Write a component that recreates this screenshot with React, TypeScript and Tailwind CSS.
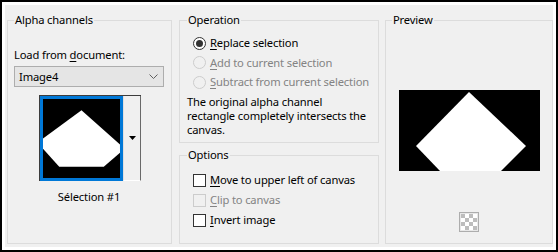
import React from "react";

const U = ({ c }: { c: string }) => <span className="underline underline-offset-[2px]">{c}</span>;

function Radio({ checked, disabled }: { checked?: boolean; disabled?: boolean }) {
  return (
    <svg width="13" height="13" viewBox="0 0 13 13" className="shrink-0">
      <circle cx="6.5" cy="6.5" r="6" fill={disabled ? "#f0f0f0" : "#ffffff"} stroke={disabled ? "#cccccc" : "#333333"} strokeWidth="1" />
      {checked && <circle cx="6.5" cy="6.5" r="3.5" fill="#333333" />}
    </svg>
  );
}

function Check({ disabled }: { disabled?: boolean }) {
  return (
    <div
      className={
        "w-[13px] h-[13px] shrink-0 border " +
        (disabled ? "border-[#cccccc] bg-[#f0f0f0]" : "border-[#333333] bg-white")
      }
    />
  );
}

export default function App() {
  return (
    <div
      className="w-[558px] h-[252px] border-2 border-black bg-white p-[3px] text-[11.2px] tracking-[-0.15px] text-black"
      style={{ fontFamily: '"Noto Sans", Arial, sans-serif' }}
    >
      <div className="flex h-full bg-[#f0f0f0] pl-[2px] pt-[7px]">
        {/* Alpha channels */}
        <fieldset className="w-[165px] h-[232px] border border-[#dcdcdc] pl-[6px]">
          <legend className="ml-[0px] px-[1px] leading-[16px]">Alpha channels</legend>
          <div className="mt-[19px] leading-[16px]">
            Load from <U c="d" />ocument:
          </div>
          <div className="mt-[3px] w-[150px] h-[21px] border border-[#adadad] bg-[#e5e5e5] flex items-center justify-between pl-[4px] pr-[5px]">
            <span className="leading-[16px]">Image4</span>
            <svg width="9" height="5" viewBox="0 0 9 5">
              <path d="M0.5 0.5 L4.5 4.5 L8.5 0.5" fill="none" stroke="#606060" strokeWidth="1" />
            </svg>
          </div>
          <div className="mt-[8px] ml-[25px] flex w-[102px] h-[86px] border-t border-l border-[#3c3c3c]">
            <div className="w-[83px] h-[85px] border-[3px] border-[#0078d7] bg-black">
              <svg width="77" height="79" viewBox="0 0 76 78" className="block">
                <polygon points="38,11 0,39 0,49 16,67 60,67 76,53 76,45" fill="white" />
              </svg>
            </div>
            <div className="flex-1 h-[85px] border-r border-b border-r-[#696969] border-b-white border-l border-l-[#e0e0e0] flex items-center justify-center">
              <svg width="7" height="4" viewBox="0 0 7 4">
                <polygon points="0,0 7,0 3.5,4" fill="black" />
              </svg>
            </div>
          </div>
          <div className="mt-[8px] w-[150px] text-center leading-[16px]">Sélection #1</div>
        </fieldset>

        {/* Middle column */}
        <div className="ml-[7px] flex flex-col">
          <fieldset className="w-[200px] h-[131px] border border-[#dcdcdc] pl-[7px]">
            <legend className="ml-[0px] px-[1px] leading-[16px]">Operation</legend>
            <div className="mt-[5px] ml-[6px]">
              <div className="h-[20px] flex items-center gap-[4px]">
                <Radio checked />
                <span className="leading-[16px]">
                  <U c="R" />eplace selection
                </span>
              </div>
              <div className="h-[19px] flex items-center gap-[4px] text-[#838383]">
                <Radio disabled />
                <span className="leading-[16px]">
                  <U c="A" />dd to current selection
                </span>
              </div>
              <div className="h-[20px] flex items-center gap-[4px] text-[#838383]">
                <Radio disabled />
                <span className="leading-[16px] whitespace-nowrap">
                  <U c="S" />ubtract from current selection
                </span>
              </div>
            </div>
            <p className="mt-[3px] leading-[14px]">
              The original alpha channel
              <br />
              rectangle completely intersects the
              <br />
              canvas.
            </p>
          </fieldset>
          <fieldset className="mt-[4px] w-[200px] h-[97px] border border-[#dcdcdc] pl-[7px]">
            <legend className="ml-[0px] px-[1px] leading-[16px]">Options</legend>
            <div className="mt-[7px] ml-[6px]">
              <div className="h-[20px] flex items-center gap-[4px]">
                <Check />
                <span className="leading-[16px] whitespace-nowrap">
                  <U c="M" />ove to upper left of canvas
                </span>
              </div>
              <div className="h-[20px] flex items-center gap-[4px] text-[#838383]">
                <Check disabled />
                <span className="leading-[16px]">
                  <U c="C" />lip to canvas
                </span>
              </div>
              <div className="h-[20px] flex items-center gap-[4px]">
                <Check />
                <span className="leading-[16px]">
                  <U c="I" />nvert image
                </span>
              </div>
            </div>
          </fieldset>
        </div>

        {/* Preview */}
        <fieldset className="ml-[6px] w-[168px] h-[232px] border border-[#dcdcdc] flex flex-col items-center">
          <legend className="ml-[6px] px-[1px] leading-[16px]">Preview</legend>
          <div className="mt-[62px] w-[141px] h-[81px] bg-black">
            <svg width="141" height="81" viewBox="0 0 141 81" className="block">
              <polygon points="70,2 17,56 41,81 102,81 127,56" fill="white" />
            </svg>
          </div>
          <div className="mt-[41px] w-[20px] h-[20px] border border-[#adadad] bg-[#e8e8e8] flex items-center justify-center">
            <svg width="16" height="16" viewBox="0 0 16 16" className="block">
              <rect width="16" height="16" fill="#ffffff" />
              <rect x="0" y="0" width="4" height="4" fill="#bdbdbd" />
              <rect x="8" y="0" width="4" height="4" fill="#bdbdbd" />
              <rect x="4" y="4" width="4" height="4" fill="#bdbdbd" />
              <rect x="12" y="4" width="4" height="4" fill="#bdbdbd" />
              <rect x="0" y="8" width="4" height="4" fill="#bdbdbd" />
              <rect x="8" y="8" width="4" height="4" fill="#bdbdbd" />
              <rect x="4" y="12" width="4" height="4" fill="#bdbdbd" />
              <rect x="12" y="12" width="4" height="4" fill="#bdbdbd" />
            </svg>
          </div>
        </fieldset>
      </div>
    </div>
  );
}
